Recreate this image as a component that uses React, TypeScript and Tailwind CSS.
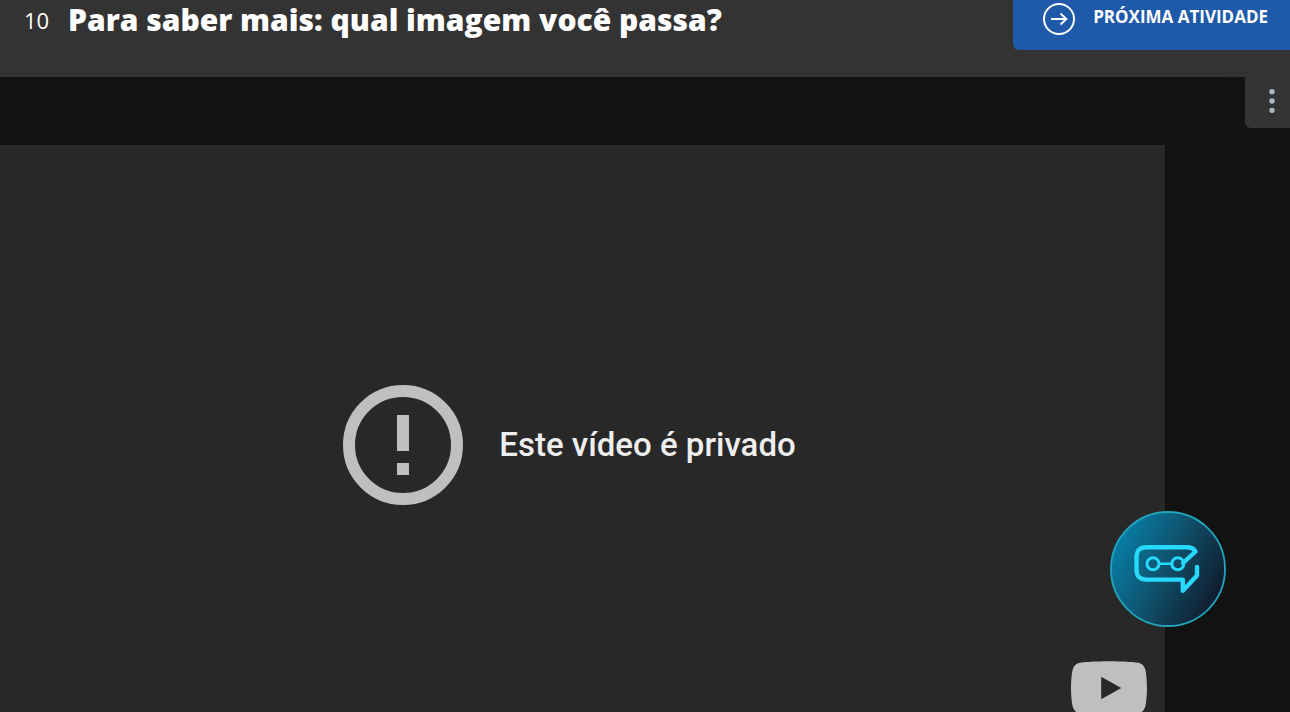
import { EllipsisVertical } from "lucide-react";

function NextArrowIcon() {
  return (
    <svg className="size-8 shrink-0" viewBox="0 0 32 32" fill="none" stroke="currentColor" strokeWidth="2" aria-hidden="true">
      <circle cx="16" cy="16" r="15" />
      <path d="M8 16H23M17.5 10.5L23.3 16L17.5 21.5" />
    </svg>
  );
}

function ErrorIcon() {
  return (
    <svg className="size-[120px] shrink-0 text-[#bfbfbf]" viewBox="0 0 120 120" fill="none" aria-hidden="true">
      <circle cx="60" cy="60" r="54" stroke="currentColor" strokeWidth="12" />
      <path d="M54 30H66V66H54ZM54 78H66V90H54Z" fill="currentColor" />
    </svg>
  );
}

function YoutubeIcon() {
  return (
    <svg className="h-[54px] w-[76px]" viewBox="0 0 68 48" aria-hidden="true">
      <path
        fill="#bfbfbf"
        d="M66.52 7.74c-.78-2.93-2.49-5.41-5.42-6.19C55.79.13 34 0 34 0S12.21.13 6.9 1.55C3.97 2.33 2.27 4.81 1.48 7.74.06 13.05 0 24 0 24s.06 10.95 1.48 16.26c.78 2.93 2.49 5.41 5.42 6.19C12.21 47.87 34 48 34 48s21.79-.13 27.1-1.55c2.93-.78 4.64-3.26 5.42-6.19C67.94 34.95 68 24 68 24s-.06-10.95-1.48-16.26z"
      />
      <path fill="#282828" d="M45 24 27 14v20z" />
    </svg>
  );
}

function AssistantIcon() {
  return (
    <svg className="size-[116px]" viewBox="0 0 116 116" fill="none" aria-hidden="true">
      <defs>
        <linearGradient id="assistant-bg" x1="8" y1="30" x2="108" y2="80" gradientUnits="userSpaceOnUse">
          <stop offset="0" stopColor="#077da5" />
          <stop offset="0.5" stopColor="#10506a" />
          <stop offset="1" stopColor="#101e30" />
        </linearGradient>
      </defs>
      <circle cx="58" cy="58" r="57" fill="url(#assistant-bg)" stroke="#20a5bd" strokeWidth="1.8" />
      <g stroke="#27d9fc" strokeLinejoin="round" strokeLinecap="round">
        <path
          strokeWidth="4.4"
          d="M73 52L85.5 40.5C84 37.5 81 36.3 76 36.3H37C29 36.3 26.5 39.5 26.5 47V58C26.5 65.5 29.5 68.6 37 68.6H72.8V79.8L87 64.5V56"
        />
        <circle cx="43" cy="52.7" r="6" strokeWidth="3" />
        <circle cx="67.8" cy="52.7" r="6" strokeWidth="3" />
        <path strokeWidth="2.6" d="M50 52.7H61" />
      </g>
    </svg>
  );
}

export default function App() {
  return (
    <div className="relative flex h-screen flex-col overflow-hidden bg-linear-to-r from-[#121212] from-95% to-[#121514] font-['Open_Sans',sans-serif] text-white">
      <header className="flex h-[77px] shrink-0 items-start justify-between bg-[#333333]">
        <div className="flex items-center pl-6">
          <span className="w-11 text-[22px] leading-10 font-medium">10</span>
          <h1 className="text-[30px] leading-10 font-extrabold">Para saber mais: qual imagem você passa?</h1>
        </div>
        <a
          href="#proxima"
          className="flex h-[50px] items-start gap-[18px] rounded-bl-md bg-[#1e5aa9] pt-[3px] pr-[22px] pl-[30px] text-[17px] font-bold"
        >
          <NextArrowIcon />
          <span className="leading-7">PRÓXIMA ATIVIDADE</span>
        </a>
      </header>

      <main className="flex items-start justify-between">
        <section className="relative mt-[68px] mr-20 flex min-h-[600px] flex-1 items-center justify-center gap-9 bg-[#282828] pr-[26px]">
          <ErrorIcon />
          <p className="font-[Roboto,sans-serif] text-[33px] font-medium text-[#eeeeee]">Este vídeo é privado</p>
          <a href="#youtube" aria-label="YouTube" className="absolute right-[18px] bottom-[30px]">
            <YoutubeIcon />
          </a>
        </section>
        <button
          type="button"
          aria-label="Menu"
          className="flex h-[51px] w-[45px] shrink-0 items-center justify-end rounded-bl-md bg-[#333434] pr-0.5 pb-1 text-[#a9bac5]"
        >
          <EllipsisVertical className="size-8" />
        </button>
      </main>

      <button type="button" aria-label="Assistente" className="absolute right-16 bottom-[85px] rounded-full">
        <AssistantIcon />
      </button>
    </div>
  );
}
